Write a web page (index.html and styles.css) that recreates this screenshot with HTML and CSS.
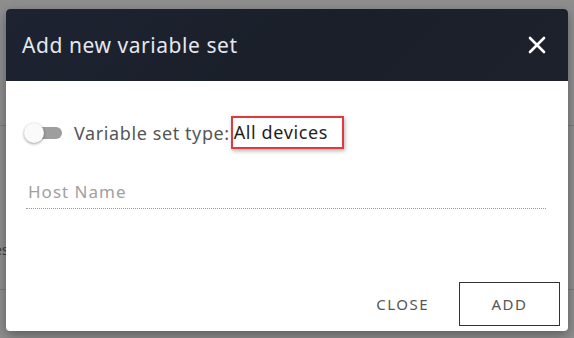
FILE: index.html
```html
<!DOCTYPE html>
<html lang="en">
<head>
  <meta charset="UTF-8" />
  <title>Add new variable set</title>
  <link rel="stylesheet" href="styles.css">
</head>
<body>
  <!-- pagina de fondo (casi tapada por el dialogo) -->
  <div class="backdrop">
    <div class="bg-line bg-line-top"></div>
    <div class="bg-text">es</div>
    <div class="bg-line bg-line-bottom"></div>
  </div>

  <div class="dialog">
    <header class="dialog-header">
      <h2>Add new variable set</h2>
      <button class="close-icon" aria-label="Close">
        <svg width="18" height="18" viewBox="0 0 18 18">
          <path d="M2 2 L16 16 M16 2 L2 16" stroke="#fff" stroke-width="2.6" stroke-linecap="round"/>
        </svg>
      </button>
    </header>

    <div class="dialog-body">
      <div class="type-row">
        <span class="toggle"><span class="knob"></span></span>
        <span class="type-label">Variable set type:</span>
        <span class="type-value">All devices</span>
      </div>

      <div class="field">
        <input type="text" placeholder="Host Name">
      </div>
    </div>

    <div class="dialog-actions">
      <button class="btn-text">CLOSE</button>
      <button class="btn-outline">ADD</button>
    </div>
  </div>
</body>
</html>
```

FILE: styles.css
```css
/* Reset */
* {
  box-sizing: border-box;
  margin: 0;
  padding: 0;
  font-family: 'Noto Sans', 'DejaVu Sans', sans-serif;
}

body {
  background-color: #8e8e8e;
  width: 574px;
  height: 338px;
  overflow: hidden;
  position: relative;
}

/* Restos de la pagina detras del modal */
.backdrop {
  position: absolute;
  inset: 0;
}

.bg-line {
  position: absolute;
  left: 0;
  right: 0;
  height: 1px;
  background-color: #7c7c7c;
}

.bg-line-top { top: 125px; }
.bg-line-bottom { top: 289px; }

.bg-text {
  position: absolute;
  left: -6px;
  top: 240px;
  font-size: 14px;
  color: #3c3c3c;
}

/* Dialogo */
.dialog {
  position: relative;
  margin: 9px 6px 0 6px;
  width: 562px;
  height: 322px;
  background-color: #fff;
  border-radius: 4px;
  box-shadow: 0 4px 12px rgba(0, 0, 0, 0.35);
  display: flex;
  flex-direction: column;
  overflow: hidden;
}

.dialog-header {
  height: 72px;
  background: linear-gradient(135deg, #1d2331 0%, #1a1f29 55%, #1c212b 100%);
  display: flex;
  align-items: center;
  justify-content: space-between;
  padding: 0 22px 0 16px;
}

.dialog-header h2 {
  font-size: 21px;
  font-weight: 400;
  color: #e4e8ee;
  letter-spacing: 0.55px;
}

.close-icon {
  background: none;
  border: none;
  cursor: pointer;
  display: flex;
  margin-top: -1px;
}

.dialog-body {
  flex: 1;
  padding: 35px 22px 0 18px;
}

.type-row {
  display: flex;
  align-items: center;
  height: 33px;
}

.toggle {
  position: relative;
  width: 38px;
  height: 14px;
  margin-right: 12px;
  display: inline-block;
}

.toggle::before {
  content: "";
  position: absolute;
  left: 8px;
  right: 0;
  top: 1px;
  height: 12px;
  border-radius: 7px;
  background-color: #9e9e9e;
}

.knob {
  position: absolute;
  left: 0;
  top: -3px;
  width: 20px;
  height: 20px;
  border-radius: 50%;
  background-color: #fafafa;
  box-shadow: 0 1px 3px rgba(0, 0, 0, 0.4);
}

.type-label {
  font-size: 18px;
  letter-spacing: 0.6px;
  color: #555;
  margin-right: 1px;
}

.type-value {
  font-size: 18px;
  letter-spacing: 0.6px;
  color: #1e1e1e;
  height: 33px;
  line-height: 29px;
  padding: 0 14px 0 1px;
  border: 2px solid #e0393e;
  box-shadow: 1px 2px 4px rgba(0, 0, 0, 0.3);
}

.field {
  margin-top: 30px;
  margin-left: 2px;
}

.field input {
  width: 100%;
  border: none;
  border-bottom: 1px dotted #9a9a9a;
  font-size: 17px;
  letter-spacing: 1px;
  padding: 1px 0 5px 2px;
  color: #333;
  outline: none;
  background: transparent;
}

.field input::placeholder {
  color: #a0a0a0;
}

.dialog-actions {
  display: flex;
  justify-content: flex-end;
  align-items: center;
  gap: 22px;
  padding: 0 8px 5px 0;
}

.btn-text {
  background: none;
  border: none;
  font-size: 15px;
  letter-spacing: 1.5px;
  color: #555;
  padding: 10px 8px;
  cursor: pointer;
}

.btn-outline {
  background: #fff;
  border: 1px solid #333;
  font-size: 15px;
  letter-spacing: 1.5px;
  color: #555;
  width: 101px;
  height: 44px;
  cursor: pointer;
}
```
